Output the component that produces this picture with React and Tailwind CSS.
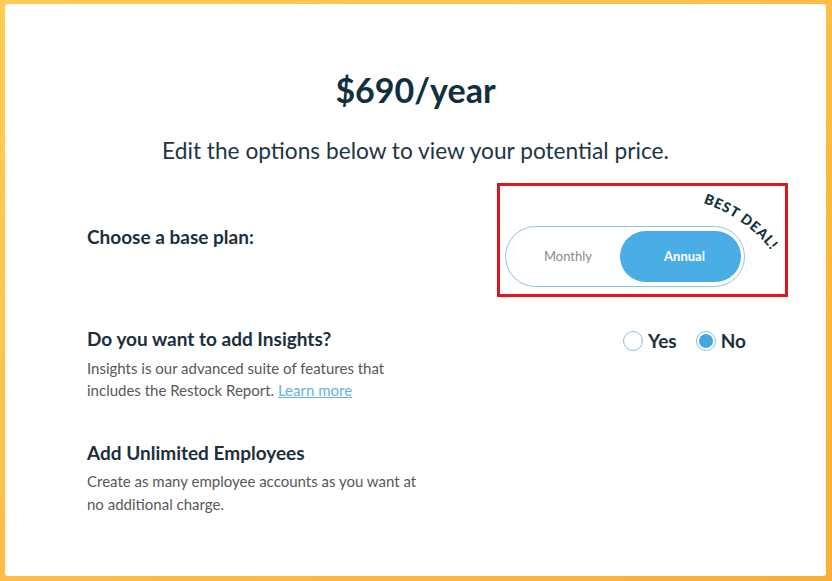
const font = { fontFamily: "Lato, 'Open Sans', sans-serif" };

const Radio = ({ checked, label }) => (
    <label className="flex items-center gap-[5px]">
        {checked ? (
            <span className="flex h-[20px] w-[20px] items-center justify-center rounded-full border border-[#7fc3e3] bg-white">
                <span className="h-[14px] w-[14px] rounded-full bg-[#45a6e2]"></span>
            </span>
        ) : (
            <span className="h-[20px] w-[20px] rounded-full border border-[#7fc3e3] bg-white"></span>
        )}
        <span className="text-[19px] font-bold leading-[24px] text-[#1c2f3d]">{label}</span>
    </label>
);

const BestDeal = () => (
    <svg className="absolute left-0 top-0 overflow-visible" width="285" height="108" viewBox="0 0 285 108">
        <defs>
            <path id="dealArc" d="M183.8 12.2 A143 143 0 0 1 282.8 81.5" fill="none" />
        </defs>
        <text fill="#142f3e" fontSize="14" fontWeight="900" letterSpacing="0.8" style={font}>
            <textPath href="#dealArc" startOffset="20">BEST DEAL!</textPath>
        </text>
    </svg>
);

const App = () => {
    return (
        <div className="h-[581px] w-[832px] bg-gradient-to-br from-[#ffcd55] to-[#fbae36] pb-[5px] pl-[5px] pr-[6px] pt-[4px]" style={font}>
            <div className="h-full w-full rounded-[3px] bg-white">

                <div className="pt-[65px] text-center">
                    <h1 className="text-[34px] font-bold leading-[42px] text-[#10303f]">$690/year</h1>
                    <p className="mt-[25px] text-[22.7px] leading-[30px] text-[#1d3645]">Edit the options below to view your potential price.</p>
                </div>

                {/* base plan */}
                <div className="mt-[17px] flex items-center pl-[82px]">
                    <div className="w-[410px] pb-[6px]">
                        <h3 className="text-[19px] font-bold leading-[26px] text-[#1c2f3d]">Choose a base plan:</h3>
                    </div>
                    <div className="relative h-[114px] w-[291px] border-[3px] border-[#e3141b] pl-[5px] pt-[40px]">
                        <BestDeal />
                        <div className="flex h-[61px] w-[240px] items-center rounded-full border border-[#8ec5da] bg-white pr-[3px]">
                            <div className="flex-1 pl-[10px] text-center text-[13px] text-[#8a8a8a]">Monthly</div>
                            <div className="flex h-[51px] w-[121px] items-center justify-center rounded-full bg-[#4badE6] pl-[8px] text-[13px] font-bold text-white">Annual</div>
                        </div>
                    </div>
                </div>

                {/* insights */}
                <div className="mt-[29px] flex pl-[82px]">
                    <div className="w-[410px]">
                        <h3 className="text-[19px] font-bold leading-[26px] text-[#1c2f3d]">Do you want to add Insights?</h3>
                        <p className="mt-[5px] text-[15px] leading-[22px] text-[#585858]">
                            Insights is our advanced suite of features that<br />
                            includes the Restock Report. <a href="#" className="text-[#62b4de] underline">Learn more</a>
                        </p>
                    </div>
                    <div className="flex items-start gap-[19px] pl-[126px] pt-[3px]">
                        <Radio label="Yes" />
                        <Radio checked label="No" />
                    </div>
                </div>

                {/* employees */}
                <div className="mt-[39px] pl-[82px]">
                    <h3 className="text-[19px] font-bold leading-[26px] text-[#1c2f3d]">Add Unlimited Employees</h3>
                    <p className="mt-[4px] text-[15px] leading-[23px] text-[#585858]">
                        Create as many employee accounts as you want at<br />
                        no additional charge.
                    </p>
                </div>

            </div>
        </div>
    );
};

export default App;
